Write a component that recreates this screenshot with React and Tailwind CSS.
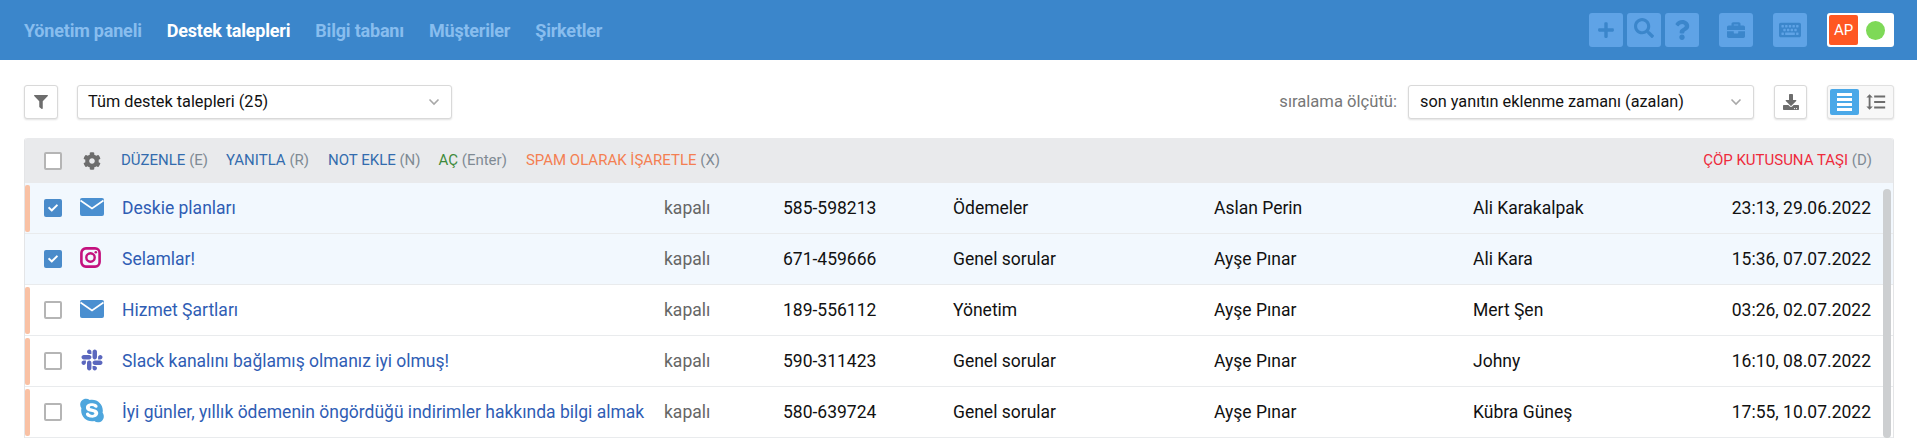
import React from "react";
import { FaPlus, FaSearch, FaQuestion, FaBriefcase, FaKeyboard, FaFilter, FaCog, FaSlack, FaSkype, FaDownload, FaCheck } from "react-icons/fa";
import { MdFormatLineSpacing } from "react-icons/md";

const font = { fontFamily: "Roboto, sans-serif" };

function Mail() {
  return (
    <svg width="24" height="18" viewBox="0 0 24 18">
      <rect x="0" y="0" width="24" height="18" rx="2" fill="#4a8fd0" />
      <path d="M0.5 2.5 L12 10.5 L23.5 2.5" fill="none" stroke="#fff" strokeWidth="1.6" />
    </svg>
  );
}

function Instagram() {
  return (
    <svg width="21" height="21" viewBox="0 0 21 21">
      <rect x="1.4" y="1.4" width="18.2" height="18.2" rx="4.5" fill="none" stroke="#c4117e" strokeWidth="2.6" />
      <circle cx="10.5" cy="10.5" r="4.2" fill="none" stroke="#c4117e" strokeWidth="2.4" />
      <circle cx="15.8" cy="5.2" r="1.3" fill="#c4117e" />
    </svg>
  );
}

function Chevron() {
  return (
    <svg width="12" height="8" viewBox="0 0 12 8">
      <path d="M1.5 1.5 L6 6 L10.5 1.5" fill="none" stroke="#a8a8a8" strokeWidth="1.6" />
    </svg>
  );
}

function TopBtn({ children, className = "" }) {
  return (
    <div className={`w-[34px] h-[34px] rounded-[3px] bg-[#5fa3e6] text-[#3b86cb] flex items-center justify-center ${className}`}>
      {children}
    </div>
  );
}

function Checkbox({ checked }) {
  return checked ? (
    <div className="w-[18px] h-[18px] rounded-[2px] bg-[#4a8bca] flex items-center justify-center text-white">
      <FaCheck size={10} />
    </div>
  ) : (
    <div className="w-[18px] h-[18px] rounded-[2px] bg-white border-2 border-[#b5b5b5]" />
  );
}

function Action({ label, hint, color, className = "" }) {
  return (
    <span className={`text-[15px] whitespace-nowrap ${className}`} style={{ color }}>
      {label} <span className="text-[#808a94]">{hint}</span>
    </span>
  );
}

const rows = [
  { icon: <Mail />, checked: true, accent: true, title: "Deskie planları", id: "585-598213", cat: "Ödemeler", a: "Aslan Perin", b: "Ali Karakalpak", d: "23:13, 29.06.2022" },
  { icon: <Instagram />, checked: true, accent: false, title: "Selamlar!", id: "671-459666", cat: "Genel sorular", a: "Ayşe Pınar", b: "Ali Kara", d: "15:36, 07.07.2022" },
  { icon: <Mail />, checked: false, accent: true, title: "Hizmet Şartları", id: "189-556112", cat: "Yönetim", a: "Ayşe Pınar", b: "Mert Şen", d: "03:26, 02.07.2022" },
  { icon: <FaSlack size={24} color="#5b67be" />, checked: false, accent: true, title: "Slack kanalını bağlamış olmanız iyi olmuş!", id: "590-311423", cat: "Genel sorular", a: "Ayşe Pınar", b: "Johny", d: "16:10, 08.07.2022" },
  { icon: <FaSkype size={27} color="#4ea6dd" />, checked: false, accent: true, title: "İyi günler, yıllık ödemenin öngördüğü indirimler hakkında bilgi almak", id: "580-639724", cat: "Genel sorular", a: "Ayşe Pınar", b: "Kübra Güneş", d: "17:55, 10.07.2022" },
];

function Row({ r }) {
  return (
    <div className={`h-[51px] grid grid-cols-[19px_18px_18px_24px_18px_542px_119px_170px_261px_259px_200px_1fr] items-center border-b border-[#e9ebed] text-[17.5px] ${r.checked ? "bg-[#f2f8fe]" : "bg-white"}`}>
      <div className="h-[47px] w-[5px]">
        {r.accent && <div className="h-full w-full rounded-[2px] bg-[#f9c1a4]" />}
      </div>
      <div><Checkbox checked={r.checked} /></div>
      <div className="col-start-4 flex items-center justify-start h-[24px] -mt-[3px]">{r.icon}</div>
      <div className="col-start-6 text-[#2f5db4] whitespace-nowrap">{r.title}</div>
      <div className="text-[#666]">kapalı</div>
      <div className="text-[#111]">{r.id}</div>
      <div className="text-[#111]">{r.cat}</div>
      <div className="text-[#111]">{r.a}</div>
      <div className="text-[#111]">{r.b}</div>
      <div className="text-[#111] text-right pr-[22px] whitespace-nowrap">{r.d}</div>
    </div>
  );
}

export default function App() {
  return (
    <div className="h-[438px] w-[1917px] overflow-hidden bg-white" style={font}>
      <header className="h-[60px] bg-[#3b86cb] flex items-center pl-[24px] pr-[23px]">
        <nav className="flex items-center gap-[25px] text-[18px] font-bold tracking-[-0.2px] text-[#88bdee]">
          <span>Yönetim paneli</span>
          <span className="text-white">Destek talepleri</span>
          <span>Bilgi tabanı</span>
          <span>Müşteriler</span>
          <span>Şirketler</span>
        </nav>
        <div className="ml-auto flex items-center">
          <div className="flex gap-[4px]">
            <TopBtn><FaPlus size={18} /></TopBtn>
            <TopBtn><FaSearch size={20} className="-mt-[4px]" /></TopBtn>
            <TopBtn><FaQuestion size={20} /></TopBtn>
          </div>
          <TopBtn className="ml-[20px]"><FaBriefcase size={18} /></TopBtn>
          <TopBtn className="ml-[20px]"><FaKeyboard size={22} /></TopBtn>
          <div className="ml-[20px] w-[67px] h-[34px] bg-white rounded-[3px] flex items-center pl-[2px]">
            <div className="w-[29px] h-[30px] rounded-[2px] bg-[#ff5722] text-white text-[15px] flex items-center justify-center">AP</div>
            <div className="ml-[8px] w-[19px] h-[19px] rounded-full bg-[#7ed957]" />
          </div>
        </div>
      </header>

      <div className="h-[78px] flex items-center pl-[24px] pr-[23px] pt-[6px]">
        <button className="w-[34px] h-[34px] bg-white border border-[#d9d9d9] rounded-[3px] shadow-[0_1px_2px_rgba(0,0,0,0.12)] flex items-center justify-center text-[#6d6d6d]">
          <FaFilter size={14} />
        </button>
        <div className="ml-[19px] w-[375px] h-[34px] bg-white border border-[#d9d9d9] rounded-[3px] shadow-[0_1px_2px_rgba(0,0,0,0.12)] flex items-center justify-between pl-[10px] pr-[11px] text-[16.3px] text-[#111]">
          <span>Tüm destek talepleri (25)</span>
          <Chevron />
        </div>
        <span className="ml-auto text-[16.6px] text-[#777]">sıralama ölçütü:</span>
        <div className="ml-[11px] w-[346px] h-[34px] bg-white border border-[#d9d9d9] rounded-[3px] shadow-[0_1px_2px_rgba(0,0,0,0.12)] flex items-center justify-between pl-[11px] pr-[11px] text-[16.3px] text-[#111]">
          <span>son yanıtın eklenme zamanı (azalan)</span>
          <Chevron />
        </div>
        <button className="ml-[20px] w-[33px] h-[34px] bg-white border border-[#d9d9d9] rounded-[3px] shadow-[0_1px_2px_rgba(0,0,0,0.12)] flex items-center justify-center text-[#6d6d6d]">
          <FaDownload size={16} />
        </button>
        <div className="ml-[20px] w-[67px] h-[34px] bg-[#f8f8f8] border border-[#e0e0e0] rounded-[3px] shadow-[0_1px_2px_rgba(0,0,0,0.12)] flex items-center pl-[2px]">
          <div className="w-[29px] h-[26px] rounded-[2px] bg-[#4aa8e8] flex flex-col items-center justify-center gap-[2px]">
            <span className="block w-[15px] h-[3px] bg-white" />
            <span className="block w-[15px] h-[3px] bg-white" />
            <span className="block w-[15px] h-[3px] bg-white" />
            <span className="block w-[15px] h-[3px] bg-white" />
          </div>
          <div className="flex-1 flex items-center justify-center text-[#6d6d6d]">
            <MdFormatLineSpacing size={22} />
          </div>
        </div>
      </div>

      <section className="relative ml-[24px] mr-[23px] border-l border-r border-[#e4e5e7] rounded-t-[3px]">
        <div className="h-[45px] bg-[#e9eaec] rounded-t-[3px] flex items-center pl-[19px] pr-[21px]">
          <Checkbox />
          <FaCog size={18} color="#6d6d6d" className="ml-[21px]" />
          <Action className="ml-[20px]" label="DÜZENLE" hint="(E)" color="#336cae" />
          <Action className="ml-[18px]" label="YANITLA" hint="(R)" color="#336cae" />
          <Action className="ml-[19px]" label="NOT EKLE" hint="(N)" color="#336cae" />
          <Action className="ml-[18px]" label="AÇ" hint="(Enter)" color="#3f8a3c" />
          <Action className="ml-[19px]" label="SPAM OLARAK İŞARETLE" hint="(X)" color="#f47f52" />
          <Action className="ml-auto" label="ÇÖP KUTUSUNA TAŞI" hint="(D)" color="#ee2b3c" />
        </div>
        {rows.map((r) => <Row key={r.id} r={r} />)}
        <div className="absolute right-[2px] top-[51px] bottom-0 w-[8px] rounded-[4px] bg-[#cdcfd1]" />
      </section>
    </div>
  );
}
